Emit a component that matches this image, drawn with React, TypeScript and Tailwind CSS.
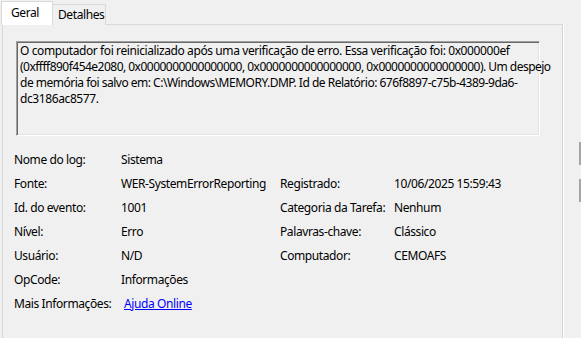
import React from "react";

const rows: Array<[string, React.ReactNode, string?, string?]> = [
  ["Nome do log:", "Sistema"],
  ["Fonte:", "WER-SystemErrorReporting", "Registrado:", "10/06/2025 15:59:43"],
  ["Id. do evento:", "1001", "Categoria da Tarefa:", "Nenhum"],
  ["Nível:", "Erro", "Palavras-chave:", "Clássico"],
  ["Usuário:", "N/D", "Computador:", "CEMOAFS"],
  ["OpCode:", "Informações"],
  [
    "Mais Informações:",
    <span className="ml-[3px] text-[#0000ff] underline">Ajuda Online</span>,
  ],
];

export default function App() {
  return (
    <div
      className="relative w-[581px] h-[338px] overflow-hidden bg-[#f0f0f0] text-[12px] tracking-[-0.4px] text-black"
      style={{ fontFamily: '"Noto Sans", "Liberation Sans", sans-serif' }}
    >
      {/* Tabs */}
      <div className="flex items-end h-[25px] pl-[1px]">
        <div className="relative z-10 h-[24px] w-[52px] bg-white border border-b-0 border-[#d9d9d9] pl-[9px] pt-[3px] leading-[16px]">
          Geral
        </div>
        <div className="h-[21px] w-[53px] bg-[#f0f0f0] border border-l-0 border-b-0 border-[#d9d9d9] pl-[5px] pt-[2px] leading-[16px]">
          Detalhes
        </div>
      </div>
      {/* Panel */}
      <div className="-mt-[1px] ml-[2px] w-[561px] h-[320px] border-t border-l border-r border-t-[#d9d9d9] border-l-[#d9d9d9] border-r-[#d4d4d4] shadow-[1px_0_0_#ffffff] pt-[16px]">
        <div className="ml-[13px] w-[524px] h-[95px] border border-t-[#a0a0a0] border-l-[#a0a0a0] border-r-white border-b-white shadow-[inset_1px_1px_0_#696969,inset_-1px_-1px_0_#e3e3e3] pl-[3px] pt-[1px] leading-[16px] whitespace-nowrap">
          <div>O computador foi reinicializado após uma verificação de erro. Essa verificação foi: 0x000000ef</div>
          <div className="tracking-[-0.52px]">(0xffff890f454e2080, 0x0000000000000000, 0x0000000000000000, 0x0000000000000000). Um despejo</div>
          <div className="tracking-[-0.5px]">de memória foi salvo em: C:\Windows\MEMORY.DMP. Id de Relatório: 676f8897-c75b-4389-9da6-</div>
          <div>dc3186ac8577.</div>
        </div>
        <div className="ml-[11px] mt-[12px] grid grid-cols-[107px_159px_114px_auto] auto-rows-[24px] items-center leading-[16px] whitespace-nowrap">
          {rows.map((r, i) => (
            <React.Fragment key={i}>
              <div>{r[0]}</div>
              <div>{r[1]}</div>
              <div>{r[2] ?? ""}</div>
              <div>{r[3] ?? ""}</div>
            </React.Fragment>
          ))}
        </div>
      </div>
      {/* edge fragments of neighbouring control */}
      <div className="absolute left-[579px] top-[142px] w-[2px] h-[23px] bg-[#a6a6a6]" />
      <div className="absolute left-[579px] top-[179px] w-[2px] h-[23px] bg-[#a6a6a6]" />
    </div>
  );
}
